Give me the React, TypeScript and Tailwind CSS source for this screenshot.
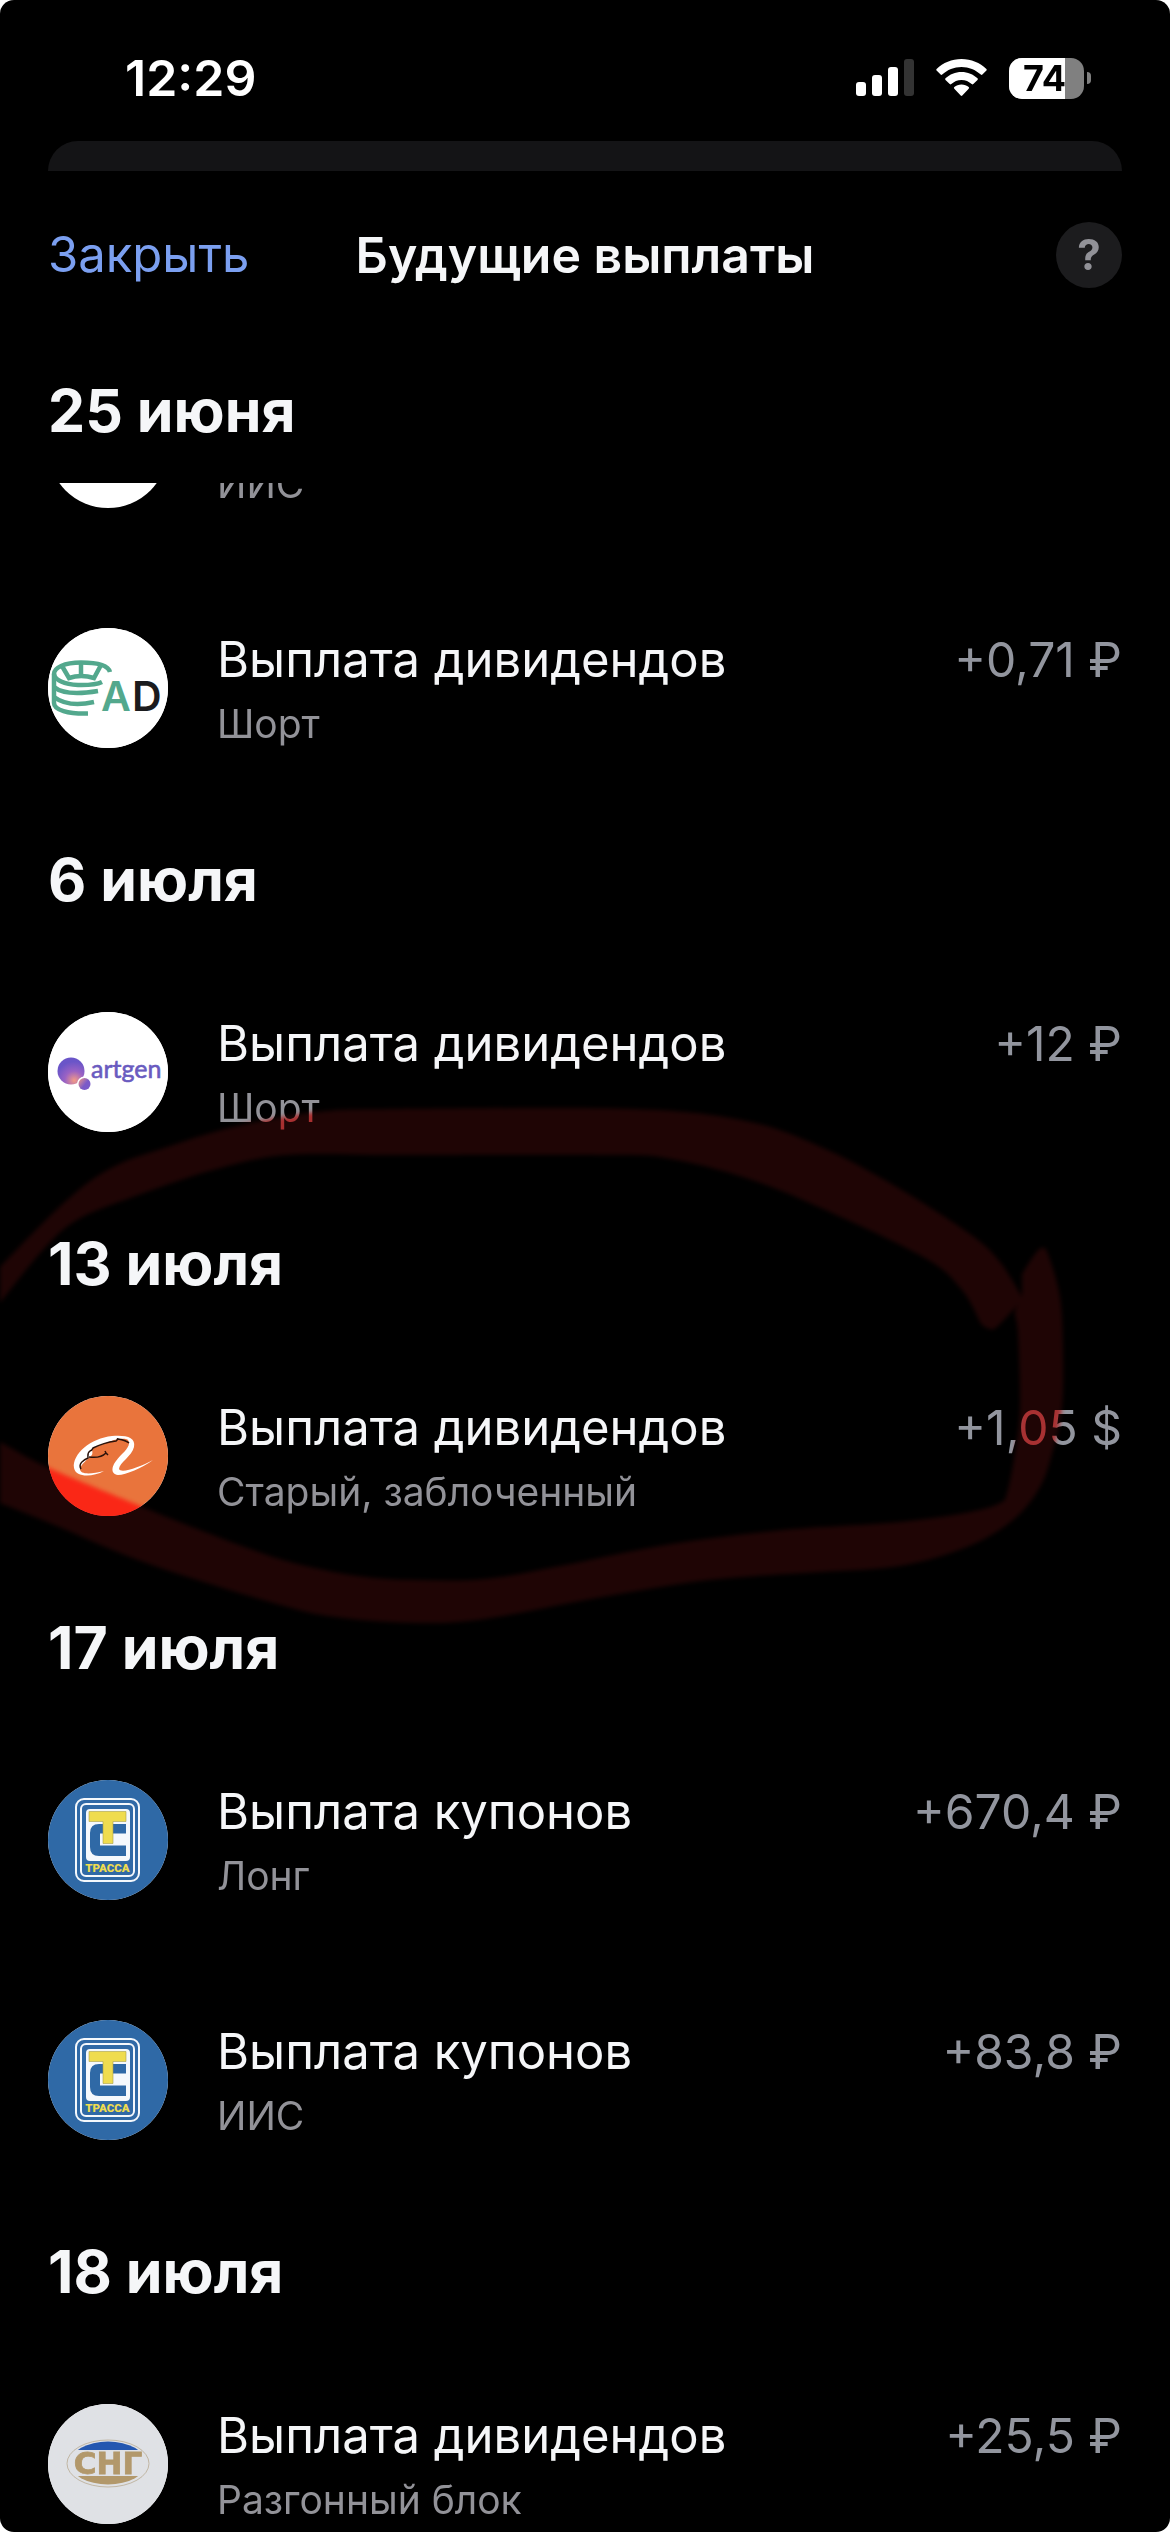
import type { ReactNode } from "react";

type Payment = { logo: ReactNode; title: string; account: string; amount: string };
type Group = { date: string; payments: Payment[] };

function SignalIcon() {
  return (
    <svg viewBox="0 0 58 38" className="h-[38px] w-[58px]" aria-label="Сигнал сети" role="img">
      <rect x="0" y="23" width="10" height="14" rx="3" fill="#fff" />
      <rect x="16" y="16" width="10" height="21" rx="3" fill="#fff" />
      <rect x="32" y="8" width="10" height="29" rx="3" fill="#fff" />
      <rect x="48" y="0" width="10" height="37" rx="3" fill="#333" />
    </svg>
  );
}

function WifiIcon() {
  return (
    <svg viewBox="0 0 51 38" className="h-[38px] w-[51px]" aria-label="Wi-Fi" role="img">
      <path d="M25.500 0C15.800 0 7 3.800 .6 10q-.7 .8 0 1.600l4 4q.8 .8 1.600 0C11.300 10.800 18.100 8 25.500 8s14.200 2.800 19.300 7.600q.8 .8 1.600 0l4-4q.7-.8 0-1.600C44 3.800 35.200 0 25.500 0z" fill="#fff" />
      <path d="M25.500 13c-6.200 0-11.800 2.400-16 6.300q-.8 .8 0 1.600l4.200 4.200q.8 .7 1.600 0C18 22.600 21.600 21 25.500 21s7.500 1.600 10.200 4.100q.8 .7 1.600 0l4.200-4.200q.8-.8 0-1.600c-4.200-3.900-9.800-6.300-16-6.300z" fill="#fff" />
      <path d="M25.500 25.500c-2.800 0-5.300 1-7.200 2.600q-.8 .8 0 1.600l6.400 6.800q.8 .8 1.600 0l6.400-6.800q.8-.8 0-1.600c-1.900-1.600-4.400-2.600-7.200-2.600z" fill="#fff" />
    </svg>
  );
}

function Battery({ level }: { level: number }) {
  return (
    <div className="flex items-center gap-[3px]">
      <div className="relative">
        <div className="flex h-[41px] w-[75px] overflow-hidden rounded-[13px] bg-[#808080]">
          <div className="bg-white" style={{ width: `${level}%` }} />
        </div>
        <span className="absolute inset-0 flex items-center justify-center pr-1 text-[36px] leading-[44px] font-bold text-black">{level}</span>
      </div>
      <div className="h-3 w-1 rounded-r-full bg-[#808080]" />
    </div>
  );
}

function AdLogo() {
  return (
    <svg viewBox="0 0 120 120" className="size-full">
      <rect width="120" height="120" fill="#fff" />
      <g fill="none" stroke="#53a88d" strokeWidth="4.500">
        <path d="M62 44C60 37 48 34.500 33 34.500 16 34.500 6 40 6 46v29C6 82 20 86 40 85.500" />
        <path d="M6 46C7 52 16 56.500 30 57c13 .3 20-1 24-3" />
        <path d="M6 59C12 64 26 67 50 63" />
        <path d="M6 69C14 75 28 78 46 74" />
        <path d="M14 38l7 12q12-4 25 0l7-13" />
        <path d="M33 35v12" />
      </g>
      <text x="53" y="83" fontFamily="Inter" fontWeight="600" fontSize="41" fill="#53a88d">A</text>
      <text x="84" y="83" fontFamily="Inter" fontWeight="600" fontSize="41" fill="#1b1b1d">D</text>
    </svg>
  );
}

function ArtgenLogo() {
  return (
    <svg viewBox="0 0 120 120" className="size-full">
      <defs>
        <radialGradient id="artgen-big" cx="0.62" cy="0.85" r="0.7">
          <stop offset="0" stopColor="#f39a86" />
          <stop offset="0.5" stopColor="#9a62c4" />
          <stop offset="1" stopColor="#6a55c8" />
        </radialGradient>
        <linearGradient id="artgen-small" x1="0" y1="0" x2="1" y2="0.8">
          <stop offset="0" stopColor="#f39a86" />
          <stop offset="0.6" stopColor="#7a5ac8" />
        </linearGradient>
      </defs>
      <rect width="120" height="120" fill="#fff" />
      <circle cx="23" cy="59" r="13.500" fill="url(#artgen-big)" />
      <circle cx="36.500" cy="72" r="7.500" fill="#fff" />
      <circle cx="36.500" cy="72" r="6" fill="url(#artgen-small)" />
      <text x="43" y="66" fontFamily="Lato" fontWeight="400" fontSize="25" fill="#6a5bc0" stroke="#6a5bc0" strokeWidth="0.600">artgen</text>
    </svg>
  );
}

function AlibabaLogo() {
  return (
    <svg viewBox="0 0 120 120" className="size-full">
      <rect width="120" height="120" fill="#e9743c" />
      <path d="M56 75C45 81 28 82 26 72 24 58 43 42 64 40c14-1 24 1 22 11C84 60 71 67 71 73c2 5 21-2 34-9C94 72 78 79 70 79c-8-1-6-9-2-14 5-7 13-12 13-18 0-6-8-4-15-3L45 52c-2 3 1 5-2 8-4 4-10 8-11 13 0 6 12 5 24 2z" fill="#fff" />
      <path d="M33 73c-3-5 2-9 7-11 0-3-1-5 2-7 3-1 2-2 3-3 8-4 16-6 23-7 2-1 1-3 2-2 6 1 9 2 11 4M41 61c7 1 13 0 17-4l-1-2m1 2l2 2" fill="none" stroke="#2a120a" strokeWidth="1.500" />
    </svg>
  );
}

function TrassaLogo() {
  return (
    <svg viewBox="0 0 120 120" className="size-full">
      <rect width="120" height="120" fill="#2f69a6" />
      <rect x="28" y="19" width="63" height="82" rx="8" fill="none" stroke="#f4f8fc" strokeWidth="2" />
      <rect x="33" y="24" width="53" height="72" rx="5" fill="none" stroke="#f4f8fc" strokeWidth="2" />
      <rect x="38" y="29" width="44" height="52" rx="4" fill="#f4f8fc" />
      <path d="M78 44H51q-9 0-9 9v14q0 9 9 9h27V65.500H52V53.500h26z" fill="#2f69a6" />
      <path d="M41 31.500h37v10H65v22H55v-22H41z" fill="#efdc4f" stroke="#a8a04a" strokeWidth="0.600" />
      <text x="59.500" y="92" textAnchor="middle" fontFamily="Roboto" fontWeight="900" fontSize="11.500" fill="#efdc4f">ТРАССА</text>
    </svg>
  );
}

function SngLogo() {
  return (
    <svg viewBox="0 0 120 120" className="size-full">
      <defs>
        <clipPath id="sng-oval"><ellipse cx="60" cy="59" rx="38" ry="21.500" /></clipPath>
      </defs>
      <rect width="120" height="120" fill="#dfe1e5" />
      <ellipse cx="60" cy="59.500" rx="41" ry="23.500" fill="none" stroke="#b9ab93" strokeWidth="0.800" />
      <g clipPath="url(#sng-oval)">
        <rect x="20" y="36" width="80" height="10" fill="#2457b0" />
        <rect x="20" y="72" width="80" height="10" fill="#b2986b" />
      </g>
      <text x="60" y="70" textAnchor="middle" fontFamily="DejaVu Sans" fontWeight="700" fontSize="31" fill="#b2986b" stroke="#b2986b" strokeWidth="0.800">СНГ</text>
    </svg>
  );
}

type Point = [number, number];

// Smooth closed outline through the points; corners are kept between the runs.
function outline(runs: Point[][]): string {
  let d = "";
  runs.forEach((run, r) => {
    d += `${r === 0 ? "M" : "L"}${run[0][0]} ${run[0][1]}`;
    for (let i = 0; i < run.length - 1; i++) {
      const a = run[Math.max(i - 1, 0)];
      const b = run[i];
      const c = run[i + 1];
      const e = run[Math.min(i + 2, run.length - 1)];
      d += `C${b[0] + (c[0] - a[0]) / 6} ${b[1] + (c[1] - a[1]) / 6} ${c[0] - (e[0] - b[0]) / 6} ${c[1] - (e[1] - b[1]) / 6} ${c[0]} ${c[1]}`;
    }
  });
  return d + "Z";
}

const MARKER_TOP = outline([
  [[-10, 1280], [0, 1267], [67, 1200], [113, 1167], [167, 1147], [233, 1127], [317, 1112], [400, 1109], [634, 1109], [746, 1121], [821, 1147], [895, 1186], [970, 1234], [1000, 1262], [1022, 1297]],
  [[1022, 1300], [998, 1326], [990, 1329], [982, 1325]],
  [[980, 1322], [962, 1290], [925, 1258], [821, 1208], [746, 1178], [671, 1159], [612, 1155], [400, 1155], [287, 1155], [213, 1170], [133, 1197], [77, 1220], [43, 1250], [0, 1303], [-10, 1318]],
]);

const MARKER_BOTTOM = outline([
  [[1022, 1274], [1035, 1254], [1042, 1248], [1048, 1254], [1060, 1297], [1063, 1350], [1062, 1407], [1053, 1450], [1040, 1487], [1013, 1520], [967, 1547], [900, 1566], [821, 1572], [709, 1580], [597, 1598], [485, 1619], [418, 1623], [343, 1618], [284, 1606], [149, 1564], [52, 1524], [0, 1503], [-10, 1499]],
  [[-10, 1438], [0, 1442], [47, 1467], [133, 1503], [200, 1530], [283, 1560], [358, 1576], [418, 1580], [485, 1579], [560, 1566], [671, 1544], [783, 1530], [900, 1522], [970, 1512], [1000, 1503], [1007, 1493], [1015, 1453], [1020, 1407], [1018, 1333], [1015, 1312], [1022, 1298]],
]);

// Translucent marker: a multiply pass tints what lies below, an additive pass shows on black.
function MarkerCircle() {
  return (
    <>
      <svg viewBox="0 1080 1170 560" className="pointer-events-none absolute top-[1080px] left-0 w-full mix-blend-multiply blur-[2px]" aria-hidden="true">
        <path d={MARKER_TOP} fill="#f04a48" />
        <path d={MARKER_BOTTOM} fill="#f04a48" />
      </svg>
      <svg viewBox="0 1080 1170 560" className="pointer-events-none absolute top-[1080px] left-0 w-full mix-blend-plus-lighter blur-[2px]" aria-hidden="true">
        <path d={MARKER_TOP} fill="#1f0505" />
        <path d={MARKER_BOTTOM} fill="#1f0505" />
      </svg>
    </>
  );
}

function DateHeading({ children }: { children: ReactNode }) {
  return <h2 className="flex h-36 shrink-0 items-center px-12 text-[59px] leading-[72px] font-bold text-[#f5f6f8]">{children}</h2>;
}

function PaymentRow({ logo, title, account, amount }: Payment) {
  return (
    <li className="flex h-60 items-start gap-[49px] px-12 pt-[60px]">
      <div className="size-[120px] shrink-0 overflow-hidden rounded-full bg-white" aria-hidden="true">{logo}</div>
      <div className="flex min-w-0 flex-1 flex-col gap-2">
        <p className="h-16 text-[49px] leading-[64px] text-[#f5f6f8]">{title}</p>
        <p className="text-[39px] leading-[48px] text-[#929298]">{account}</p>
      </div>
      <p className="text-[48px] leading-[64px] whitespace-nowrap text-[#92959e]">{amount}</p>
    </li>
  );
}

const GROUPS: Group[] = [
  { date: "6 июля", payments: [{ logo: <ArtgenLogo />, title: "Выплата дивидендов", account: "Шорт", amount: "+12 ₽" }] },
  { date: "13 июля", payments: [{ logo: <AlibabaLogo />, title: "Выплата дивидендов", account: "Старый, заблоченный", amount: "+1,05 $" }] },
  {
    date: "17 июля",
    payments: [
      { logo: <TrassaLogo />, title: "Выплата купонов", account: "Лонг", amount: "+670,4 ₽" },
      { logo: <TrassaLogo />, title: "Выплата купонов", account: "ИИС", amount: "+83,8 ₽" },
    ],
  },
  { date: "18 июля", payments: [{ logo: <SngLogo />, title: "Выплата дивидендов", account: "Разгонный блок", amount: "+25,5 ₽" }] },
];

export default function App() {
  return (
    <div className="h-screen bg-white">
      <div className="relative isolate flex h-full flex-col overflow-hidden rounded-[14px] bg-black font-['Inter',sans-serif]">
        <div className="flex h-[141px] shrink-0 items-center justify-between pt-[15px] pr-[79px] pl-[125px]">
          <time className="text-[50px] leading-[60px] font-semibold text-white">12:29</time>
          <div className="flex items-center gap-[22px]">
            <SignalIcon />
            <WifiIcon />
            <Battery level={74} />
          </div>
        </div>
        <div className="mx-12 h-[30px] shrink-0 rounded-t-[30px] bg-[#141416]" />

        <header className="grid h-[168px] shrink-0 grid-cols-[1fr_auto_1fr] items-center px-12">
          <button type="button" className="justify-self-start text-[49px] leading-[64px] text-[#7b9ff0]">Закрыть</button>
          <h1 className="text-[50px] leading-[64px] font-semibold text-[#f5f6f8]">Будущие выплаты</h1>
          <button type="button" aria-label="Справка" className="size-[66px] justify-self-end rounded-full bg-[#1c1c1e] text-[42px] leading-[66px] font-bold text-[#929298]">?</button>
        </header>

        <DateHeading>25 июня</DateHeading>
        <main className="min-h-0 flex-1 overflow-hidden">
          <ul className="-mt-[155px]">
            <PaymentRow logo={null} title="" account="ИИС" amount="" />
            <PaymentRow logo={<AdLogo />} title="Выплата дивидендов" account="Шорт" amount="+0,71 ₽" />
          </ul>
          {GROUPS.map((group) => (
            <section key={group.date}>
              <DateHeading>{group.date}</DateHeading>
              <ul>
                {group.payments.map((payment) => (
                  <PaymentRow key={payment.account} {...payment} />
                ))}
              </ul>
            </section>
          ))}
        </main>
        <MarkerCircle />
      </div>
    </div>
  );
}
